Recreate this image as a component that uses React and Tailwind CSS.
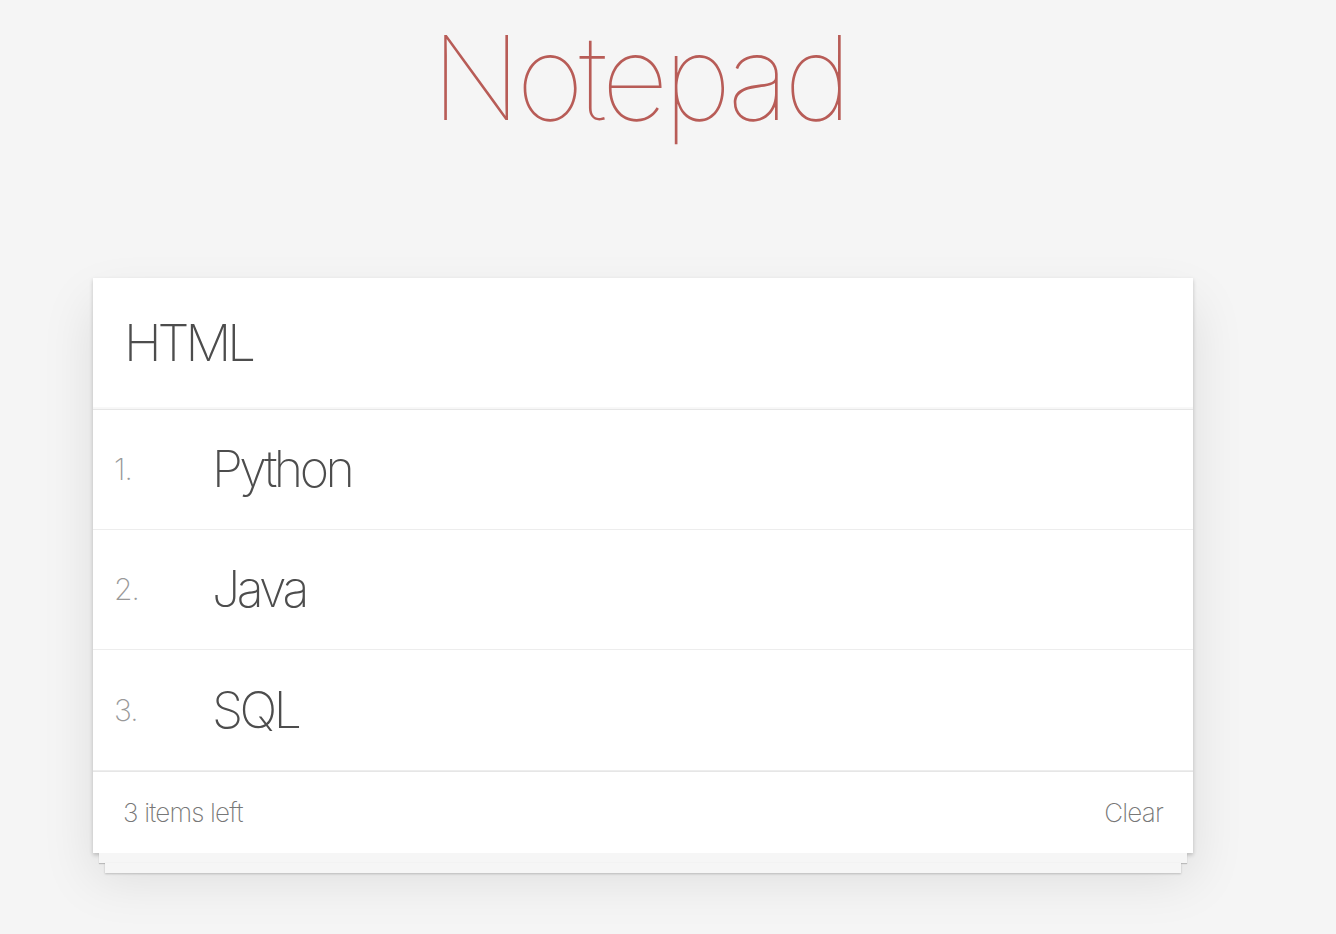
import React, { useState } from 'react';

const App = () => {
  const [items] = useState(['Python', 'Java', 'SQL']);

  return (
    <div className="min-h-screen bg-[#f5f5f5] font-['Inter','Helvetica_Neue',sans-serif] font-extralight text-[#4d4d4d]">
      <div className="w-[1100px] ml-[93px] pt-[8px]">
        {/* Title */}
        <h1 className="text-center text-[117px] leading-[140px] font-thin tracking-[-5px] text-[#b85c57] pr-[8px]">
          Notepad
        </h1>

        {/* Card */}
        <div className="mt-[130px] bg-white shadow-[0_2px_4px_rgba(0,0,0,0.2),0_25px_50px_rgba(0,0,0,0.1)]">
          <div className="h-[132px] flex items-center pl-[31px] text-[51px] tracking-[-4px] shadow-[inset_0_-2px_1px_rgba(0,0,0,0.03)] border-b border-[#e6e6e6]">
            HTML
          </div>

          <ul>
            {items.map((item, index) => (
              <li key={index} className="h-[120px] last:h-[121px] flex items-center border-b border-[#ededed]">
                <span className="w-[119px] pl-[21px] text-[30px] tracking-[-1px] text-[#999]">{index + 1}.</span>
                <span className="text-[50px] tracking-[-3.5px]">{item}</span>
              </li>
            ))}
          </ul>

          <div className="h-[82px] flex items-center justify-between pl-[30px] pr-[30px] text-[26px] tracking-[-0.8px] text-[#777] border-t border-[#e6e6e6]">
            <span>{items.length} items left</span>
            <span>Clear</span>
          </div>
        </div>
        <div className="mx-[6px] h-[10px] bg-[#f6f6f6] shadow-[0_1px_1px_rgba(0,0,0,0.2)]"></div>
        <div className="mx-[12px] h-[10px] bg-[#f6f6f6] shadow-[0_1px_2px_rgba(0,0,0,0.2)]"></div>
      </div>
    </div>
  );
};

export default App;
